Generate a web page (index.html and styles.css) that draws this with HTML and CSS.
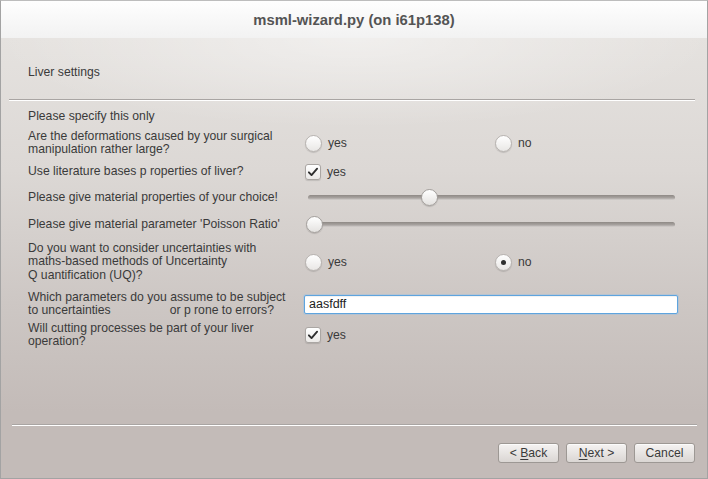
FILE: index.html
```html
<!DOCTYPE html>
<html>
<head>
<meta charset="utf-8">
<link rel="stylesheet" href="styles.css">
</head>
<body>
<div class="window">
  <div class="titlebar">msml-wizard.py (on i61p138)</div>
  <div class="body">
    <div class="page-title">Liver settings</div>
    <div class="sep top-sep"></div>
    <div class="form">
      <div class="row r1"><div class="label">Please specify this only</div><div class="ctl"></div></div>
      <div class="row r2">
        <div class="label">Are the deformations caused by your surgical<br>manipulation rather large?</div>
        <div class="ctl pair">
          <span class="opt"><span class="radio"></span>yes</span>
          <span class="opt"><span class="radio"></span>no</span>
        </div>
      </div>
      <div class="row r3">
        <div class="label">Use literature bases p roperties of liver?</div>
        <div class="ctl"><span class="opt"><span class="check"><svg viewBox="0 0 14 14" width="12" height="12"><path d="M2.2 7.4 L5.3 10.6 L11.8 3.2" fill="none" stroke="#2e2e2e" stroke-width="2.2" stroke-linecap="round" stroke-linejoin="round"/></svg></span>yes</span></div>
      </div>
      <div class="row r4">
        <div class="label">Please give material properties of your choice!</div>
        <div class="ctl"><div class="slider"><div class="track"></div><div class="handle" style="left:31%"></div></div></div>
      </div>
      <div class="row r5">
        <div class="label">Please give material parameter 'Poisson Ratio'</div>
        <div class="ctl"><div class="slider"><div class="track"></div><div class="handle" style="left:0%"></div></div></div>
      </div>
      <div class="row r6">
        <div class="label">Do you want to consider uncertainties with<br>maths-based methods of Uncertainty<br>Q uantification (UQ)?</div>
        <div class="ctl pair">
          <span class="opt"><span class="radio"></span>yes</span>
          <span class="opt"><span class="radio on"></span>no</span>
        </div>
      </div>
      <div class="row r7">
        <div class="label">Which parameters do you assume to be subject<br>to uncertainties<span class="gap"></span>or p rone to errors?</div>
        <div class="ctl"><div class="input">aasfdff</div></div>
      </div>
      <div class="row r8">
        <div class="label">Will cutting processes be part of your liver<br>operation?</div>
        <div class="ctl"><span class="opt"><span class="check"><svg viewBox="0 0 14 14" width="12" height="12"><path d="M2.2 7.4 L5.3 10.6 L11.8 3.2" fill="none" stroke="#2e2e2e" stroke-width="2.2" stroke-linecap="round" stroke-linejoin="round"/></svg></span>yes</span></div>
      </div>
    </div>
    <div class="spacer"></div>
    <div class="sep bottom-sep"></div>
    <div class="buttons">
      <button class="btn">&lt; <u>B</u>ack</button>
      <button class="btn"><u>N</u>ext &gt;</button>
      <button class="btn">Cancel</button>
    </div>
  </div>
</div>
</body>
</html>
```

FILE: styles.css
```css
* { box-sizing: border-box; }
html, body { margin: 0; padding: 0; }
body {
  width: 708px;
  height: 479px;
  font-family: "Liberation Sans", "DejaVu Sans", sans-serif;
  font-size: 12.2px;
  color: #3a3a3a;
  overflow: hidden;
}
.window {
  width: 708px;
  height: 479px;
  border: 1px solid #a3a3a3;
  border-top-color: #bdbdbd;
  display: flex;
  flex-direction: column;
}
.titlebar {
  height: 37px;
  flex: none;
  background: linear-gradient(#fefefe, #f2f2f2);
  text-align: center;
  line-height: 38px;
  font-size: 14.8px;
  color: #545454;
  font-weight: bold;
}
.body {
  flex: 1;
  display: flex;
  flex-direction: column;
  background:
    radial-gradient(ellipse 360px 90px at 50% 0%, rgba(255,255,255,0.45), rgba(255,255,255,0)),
    linear-gradient(#e5e2df 0%, #dcd8d5 30%, #cdc7c4 60%, #c3bbb8 85%, #c3bbb8 100%);
}
.page-title {
  height: 61px;
  padding-left: 27px;
  padding-top: 27px;
  line-height: 14px;
}
.sep {
  height: 2px;
  border-top: 1px solid #a9a5a3;
  border-bottom: 1px solid #ffffff;
}
.top-sep { margin: 0 12px 0 8px; }
.form {
  padding: 8px 29px 0 27px;
  display: flex;
  flex-direction: column;
}
.row {
  display: grid;
  grid-template-columns: 276px 1fr;
  align-items: center;
}
.label { line-height: 13.5px; white-space: nowrap; }
.gap { display: inline-block; width: 59px; }
.r1 { height: 16px; }
.r2 { height: 36px; }
.r3 { height: 22px; }
.r4 { height: 30px; }
.r5 { height: 24px; }
.r6 { height: 50px; }
.r7 { height: 34px; }
.r8 { height: 28px; }
.pair {
  display: grid;
  grid-template-columns: 190px 1fr;
}
.opt {
  display: inline-flex;
  align-items: center;
  gap: 6px;
  padding-left: 1px;
}
.radio {
  width: 17px;
  height: 17px;
  border-radius: 50%;
  border: 1px solid #b7b3b0;
  background: linear-gradient(#ffffff, #e9e7e5);
  box-shadow: 0 1px 1px rgba(0,0,0,0.14);
  display: inline-flex;
  align-items: center;
  justify-content: center;
}
.radio.on::after {
  content: "";
  width: 5px;
  height: 5px;
  border-radius: 50%;
  background: #2f2f2f;
}
.check {
  width: 16px;
  height: 16px;
  border-radius: 3px;
  border: 1px solid #aaa6a3;
  background: linear-gradient(#ffffff, #ebe9e7);
  box-shadow: 0 1px 1px rgba(0,0,0,0.12);
  display: inline-flex;
  align-items: center;
  justify-content: center;
}
.slider {
  position: relative;
  height: 18px;
  margin: 0 3px 0 0;
}
.track {
  position: absolute;
  left: 4px;
  right: 0;
  top: 6px;
  height: 5px;
  border-radius: 3px;
  background: linear-gradient(#8e8985, #a9a4a1 60%, #d5d1cf);
}
.handle {
  position: absolute;
  top: 0;
  width: 17px;
  height: 17px;
  margin-left: 2px;
  border-radius: 50%;
  border: 1px solid #a4a09d;
  background: linear-gradient(#ffffff, #e4e2e0);
  box-shadow: 0 1px 1px rgba(0,0,0,0.15);
}
.input {
  height: 19px;
  border: 1px solid #5ea4de;
  border-radius: 2px;
  background: #fff;
  box-shadow: 0 0 0 1px rgba(140,190,235,0.35), inset 0 1px 1px rgba(0,0,0,0.06);
  padding-left: 4px;
  line-height: 17px;
  font-size: 12.5px;
  color: #222;
}
.spacer { flex: 1; }
.bottom-sep { margin: 0 10px 0 11px; }
.buttons {
  height: 52px;
  display: flex;
  justify-content: flex-end;
  gap: 7px;
  padding: 17px 12px 0 0;
}
.btn {
  width: 61px;
  height: 20px;
  font: inherit;
  color: #3a3a3a;
  border: 1px solid #9d9894;
  border-radius: 3px;
  background: linear-gradient(#f5f3f2, #dad6d3);
  box-shadow: inset 0 1px 0 rgba(255,255,255,0.7);
  padding: 0;
  line-height: 18px;
}
.btn u { text-underline-offset: 2px; }
```
